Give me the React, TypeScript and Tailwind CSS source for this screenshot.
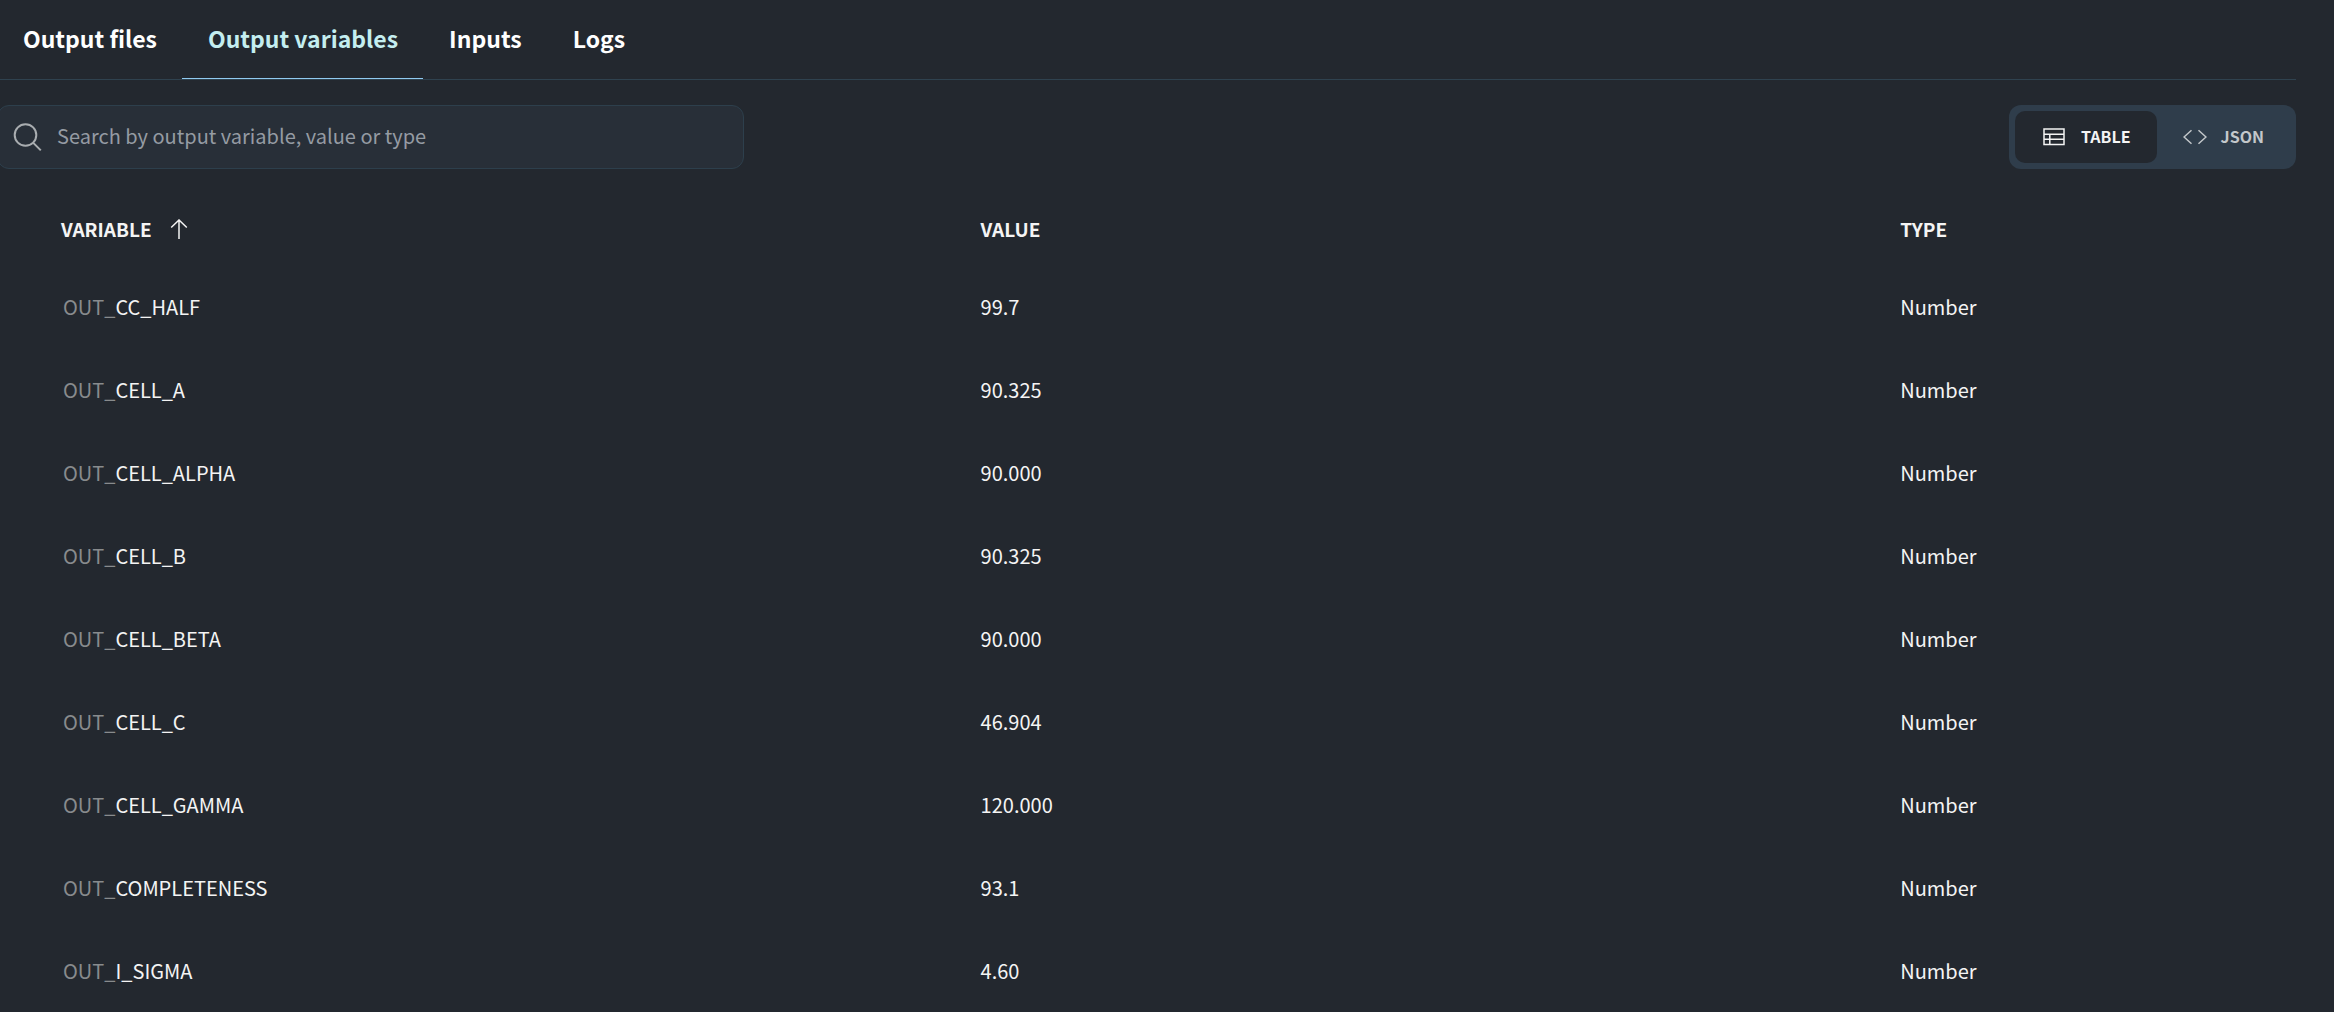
import { useState } from "react";

const TABS = ["Output files", "Output variables", "Inputs", "Logs"];

interface OutputVariable {
  name: string;
  value: string;
  type: string;
}

const VARIABLES: OutputVariable[] = [
  { name: "CC_HALF", value: "99.7", type: "Number" },
  { name: "CELL_A", value: "90.325", type: "Number" },
  { name: "CELL_ALPHA", value: "90.000", type: "Number" },
  { name: "CELL_B", value: "90.325", type: "Number" },
  { name: "CELL_BETA", value: "90.000", type: "Number" },
  { name: "CELL_C", value: "46.904", type: "Number" },
  { name: "CELL_GAMMA", value: "120.000", type: "Number" },
  { name: "COMPLETENESS", value: "93.1", type: "Number" },
  { name: "I_SIGMA", value: "4.60", type: "Number" },
];

function SearchIcon() {
  return (
    <svg className="size-8 shrink-0 text-[#a9adb0]" viewBox="0 0 32 32" fill="none" stroke="currentColor" strokeWidth="2">
      <circle cx="13.5" cy="14" r="10.8" />
      <path d="M21 21.6 28.8 29.4" />
    </svg>
  );
}

function TableIcon() {
  return (
    <svg className="h-4.5 w-5.5" viewBox="0 0 22 18" fill="none" stroke="currentColor" strokeWidth="1.5">
      <rect x="1" y="1" width="20" height="15.5" />
      <path d="M1 6.2h20M1 11.3h20M6.8 6.2v10.3" />
    </svg>
  );
}

function CodeIcon() {
  return (
    <svg className="h-4 w-6" viewBox="0 0 24 16" fill="none" stroke="currentColor" strokeWidth="1.5">
      <path d="M8.5 1.2 1 8l7.5 6.8M15.5 1.2 23 8l-7.5 6.8" />
    </svg>
  );
}

function ArrowUpIcon() {
  return (
    <svg className="h-5 w-4.5" viewBox="0 0 18 20" fill="none" stroke="currentColor" strokeWidth="1.5">
      <path d="M9 1v19M1.2 8.5 9 1l7.8 7.5" />
    </svg>
  );
}

export default function App() {
  const [tab, setTab] = useState("Output variables");
  const [view, setView] = useState("table");
  const [query, setQuery] = useState("");

  const rows = VARIABLES.filter(v =>
    `OUT_${v.name} ${v.value} ${v.type}`.toLowerCase().includes(query.toLowerCase())
  );

  return (
    <div className="min-h-screen overflow-hidden bg-[#23282f] font-['Noto_Sans_CJK_SC',sans-serif] text-[#f4f4f4]">
      <div className="-ml-[3px] mr-[38px]">
        <nav className="flex h-20 border-b border-[#2f424f]">
          {TABS.map(t => (
            <button
              key={t}
              onClick={() => setTab(t)}
              className={
                t === tab
                  ? "border-b border-[#90caf0] pr-[25px] pb-0.5 pl-[26px] text-[23px] leading-8 font-bold text-[#c4eef0]"
                  : "border-b border-transparent pr-[25px] pb-0.5 pl-[26px] text-[23px] leading-8 font-bold text-white"
              }
            >
              {t}
            </button>
          ))}
        </nav>

        <div className="mt-[25px] flex items-center justify-between">
          <label className="flex h-16 w-[747px] items-center gap-[13px] rounded-xl border border-[#2d3f4c] bg-[#282f38] pl-3.5">
            <SearchIcon />
            <input
              type="text"
              aria-label="Search variables"
              value={query}
              onChange={e => setQuery(e.target.value)}
              placeholder="Search by output variable, value or type"
              className="min-w-0 flex-1 bg-transparent pb-0.5 text-[20px] leading-8 outline-none placeholder:text-[#959ba3]"
            />
          </label>

          <div className="flex h-16 rounded-xl bg-[#2f3d4b] p-1.5 text-[16px] leading-6 font-bold">
            <button
              onClick={() => setView("table")}
              className={
                view === "table"
                  ? "flex items-center gap-4 rounded-[10px] bg-[#23282f] pr-[26px] pl-7 text-[#f4f4f4]"
                  : "flex items-center gap-4 rounded-[10px] pr-[26px] pl-7 text-[#c3c7ca]"
              }
            >
              <TableIcon />
              <span className="pb-0.5">TABLE</span>
            </button>
            <button
              onClick={() => setView("json")}
              className={
                view === "json"
                  ? "flex items-center gap-3.5 rounded-[10px] bg-[#23282f] px-[26px] text-[#f4f4f4]"
                  : "flex items-center gap-3.5 rounded-[10px] px-[26px] text-[#c3c7ca]"
              }
            >
              <CodeIcon />
              <span className="pb-0.5">JSON</span>
            </button>
          </div>
        </div>

        {view === "table" ? (
          <table className="mt-6 w-full table-fixed text-left text-[20px] leading-8">
            <thead className="text-[19px]">
              <tr className="h-[72px]">
                <th className="w-2/5 pl-16 font-bold">
                  <button className="flex items-center gap-4.5">
                    VARIABLE
                    <ArrowUpIcon />
                  </button>
                </th>
                <th className="w-2/5 pl-16 font-bold">VALUE</th>
                <th className="w-1/5 pl-16 font-bold">TYPE</th>
              </tr>
            </thead>
            <tbody>
              {rows.map(v => (
                <tr key={v.name} className="h-[83px]">
                  <td className="pl-[66px]">
                    <span className="text-[#888b8d]">OUT_</span>
                    {v.name}
                  </td>
                  <td className="pl-16">{v.value}</td>
                  <td className="pl-16">{v.type}</td>
                </tr>
              ))}
            </tbody>
          </table>
        ) : (
          <pre className="mt-8 pl-16 text-[20px] leading-8">
            {JSON.stringify(Object.fromEntries(rows.map(v => [`OUT_${v.name}`, v.value])), null, 2)}
          </pre>
        )}
      </div>
    </div>
  );
}
